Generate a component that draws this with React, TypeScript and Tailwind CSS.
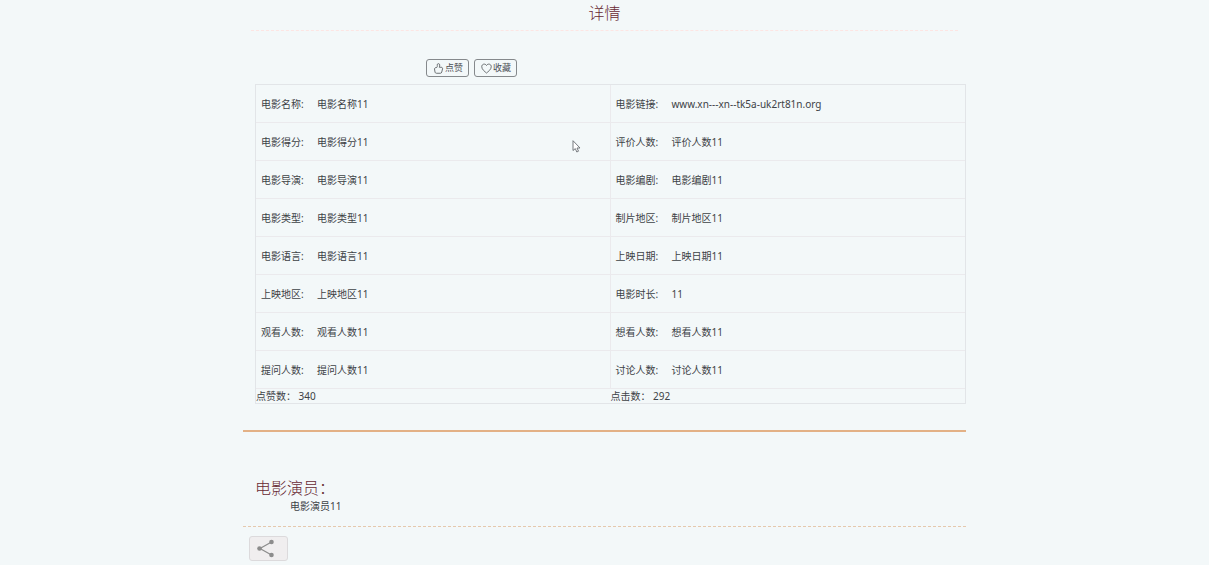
import type React from "react"
import { useState } from "react"

interface Field {
  label: string
  value: string
}

const ROWS: [Field, Field][] = [
  [
    { label: "电影名称", value: "电影名称11" },
    { label: "电影链接", value: "www.xn---xn--tk5a-uk2rt81n.org" },
  ],
  [
    { label: "电影得分", value: "电影得分11" },
    { label: "评价人数", value: "评价人数11" },
  ],
  [
    { label: "电影导演", value: "电影导演11" },
    { label: "电影编剧", value: "电影编剧11" },
  ],
  [
    { label: "电影类型", value: "电影类型11" },
    { label: "制片地区", value: "制片地区11" },
  ],
  [
    { label: "电影语言", value: "电影语言11" },
    { label: "上映日期", value: "上映日期11" },
  ],
  [
    { label: "上映地区", value: "上映地区11" },
    { label: "电影时长", value: "11" },
  ],
  [
    { label: "观看人数", value: "观看人数11" },
    { label: "想看人数", value: "想看人数11" },
  ],
  [
    { label: "提问人数", value: "提问人数11" },
    { label: "讨论人数", value: "讨论人数11" },
  ],
]

const ThumbIcon: React.FC = () => (
  <svg className="h-[11px] w-[11px]" viewBox="0 0 22 22" fill="none" stroke="currentColor" strokeWidth="1.6" strokeLinejoin="round">
    <path d="M7.5 9 C9 7.5 8.5 5 8.5 3.5 C8.5 0.5 13.5 0.5 13.5 4 C13.5 6 13 7 12.5 8.5 H16 C19 8.5 19.5 10.5 19 12 L17.5 18 C17 19.8 16 20.5 15 20.5 H7 C5 20.5 4.5 19.5 4 18 L3 12 C3 10 4.5 9 7.5 9 Z" />
  </svg>
)

const HeartIcon: React.FC = () => (
  <svg className="h-[11px] w-[11px]" viewBox="0 0 22 22" fill="none" stroke="currentColor" strokeWidth="1.6" strokeLinejoin="round">
    <path d="M11 20 C8 17.5 1.5 13 1.5 7.5 C1.5 1.5 8.5 0.5 11 5 C13.5 0.5 20.5 1.5 20.5 7.5 C20.5 13 14 17.5 11 20 Z" />
  </svg>
)

const ShareIcon: React.FC = () => (
  <svg className="h-5 w-5" viewBox="0 0 20 20" fill="#8c8c8c">
    <path d="M15.5 3 L4 9.5 L15.5 16" fill="none" stroke="#8c8c8c" strokeWidth="1.2" />
    <circle cx="15.5" cy="3" r="2.3" />
    <circle cx="3.5" cy="9.5" r="2.3" />
    <circle cx="15.5" cy="16" r="2.3" />
  </svg>
)

const Pointer: React.FC = () => (
  <svg className="pointer-events-none absolute left-[317px] top-14 h-[13px] w-[9px]" viewBox="0 0 9 13">
    <path d="M1 0.7 V10.5 L3.3 8.6 L4.8 12 L6.5 11.2 L5 8 H8 Z" fill="#fff" stroke="#666b70" strokeWidth="0.9" />
  </svg>
)

export default function App() {
  const [liked, setLiked] = useState(false)
  const [saved, setSaved] = useState(false)

  const action =
    "flex h-[18px] w-[43px] items-center justify-center gap-px rounded-[3px] border border-[#85898c] pl-px text-[9px] leading-3 text-[#4c5054]"

  return (
    <div className="min-h-screen bg-[#f3f8f9] font-['Noto_Sans','Noto_Sans_CJK_SC',sans-serif] text-[10px] leading-4 text-[#3d4246]">
      <main className="mx-auto w-full max-w-[723px]">
        <h1 className="mx-2 border-b border-dashed border-[#fde5e3] pt-px pb-[5px] text-center text-[16px] leading-6 font-light text-[#682a33]">
          详情
        </h1>

        <div className="mt-7 ml-[183px] flex gap-[5px]">
          <button type="button" className={action} aria-pressed={liked} onClick={() => setLiked(!liked)}>
            <ThumbIcon />
            点赞
          </button>
          <button type="button" className={action} aria-pressed={saved} onClick={() => setSaved(!saved)}>
            <HeartIcon />
            收藏
          </button>
        </div>

        <div className="relative mt-[7px] ml-3">
          <table className="w-full table-fixed border-separate border-spacing-0 border border-[#e2e5e8]">
            <tbody>
              {ROWS.map((row) => (
                <tr key={row[0].label}>
                  {row.map(({ label, value }, i) => (
                    <td
                      key={label}
                      className={`h-[38px] border-b border-[#ebeaed] py-0 pl-[5px] ${i === 0 ? "border-r" : ""}`}
                    >
                      <div className="flex">
                        <span className="w-14">{label}:</span>
                        <span>{value}</span>
                      </div>
                    </td>
                  ))}
                </tr>
              ))}
              <tr>
                <td className="p-0 leading-[14px]">点赞数： 340</td>
                <td className="p-0 leading-[14px]">点击数： 292</td>
              </tr>
            </tbody>
          </table>
          <Pointer />
        </div>

        <hr className="mt-[26px] border-t-2 border-[#e3b186]" />

        <section className="border-b border-dashed border-[#e5c9ae] pt-[46px] pb-3 pl-3">
          <h2 className="text-[16px] leading-5 font-light text-[#682a33]">电影演员：</h2>
          <p className="pl-[35px]">电影演员11</p>
        </section>

        <button
          type="button"
          aria-label="分享"
          className="mt-[9px] ml-[6px] flex h-[25px] w-[39px] items-center rounded-[3px] border border-[#dcdadc] bg-[#f0eeef] pl-[6px]"
        >
          <ShareIcon />
        </button>
      </main>
    </div>
  )
}
